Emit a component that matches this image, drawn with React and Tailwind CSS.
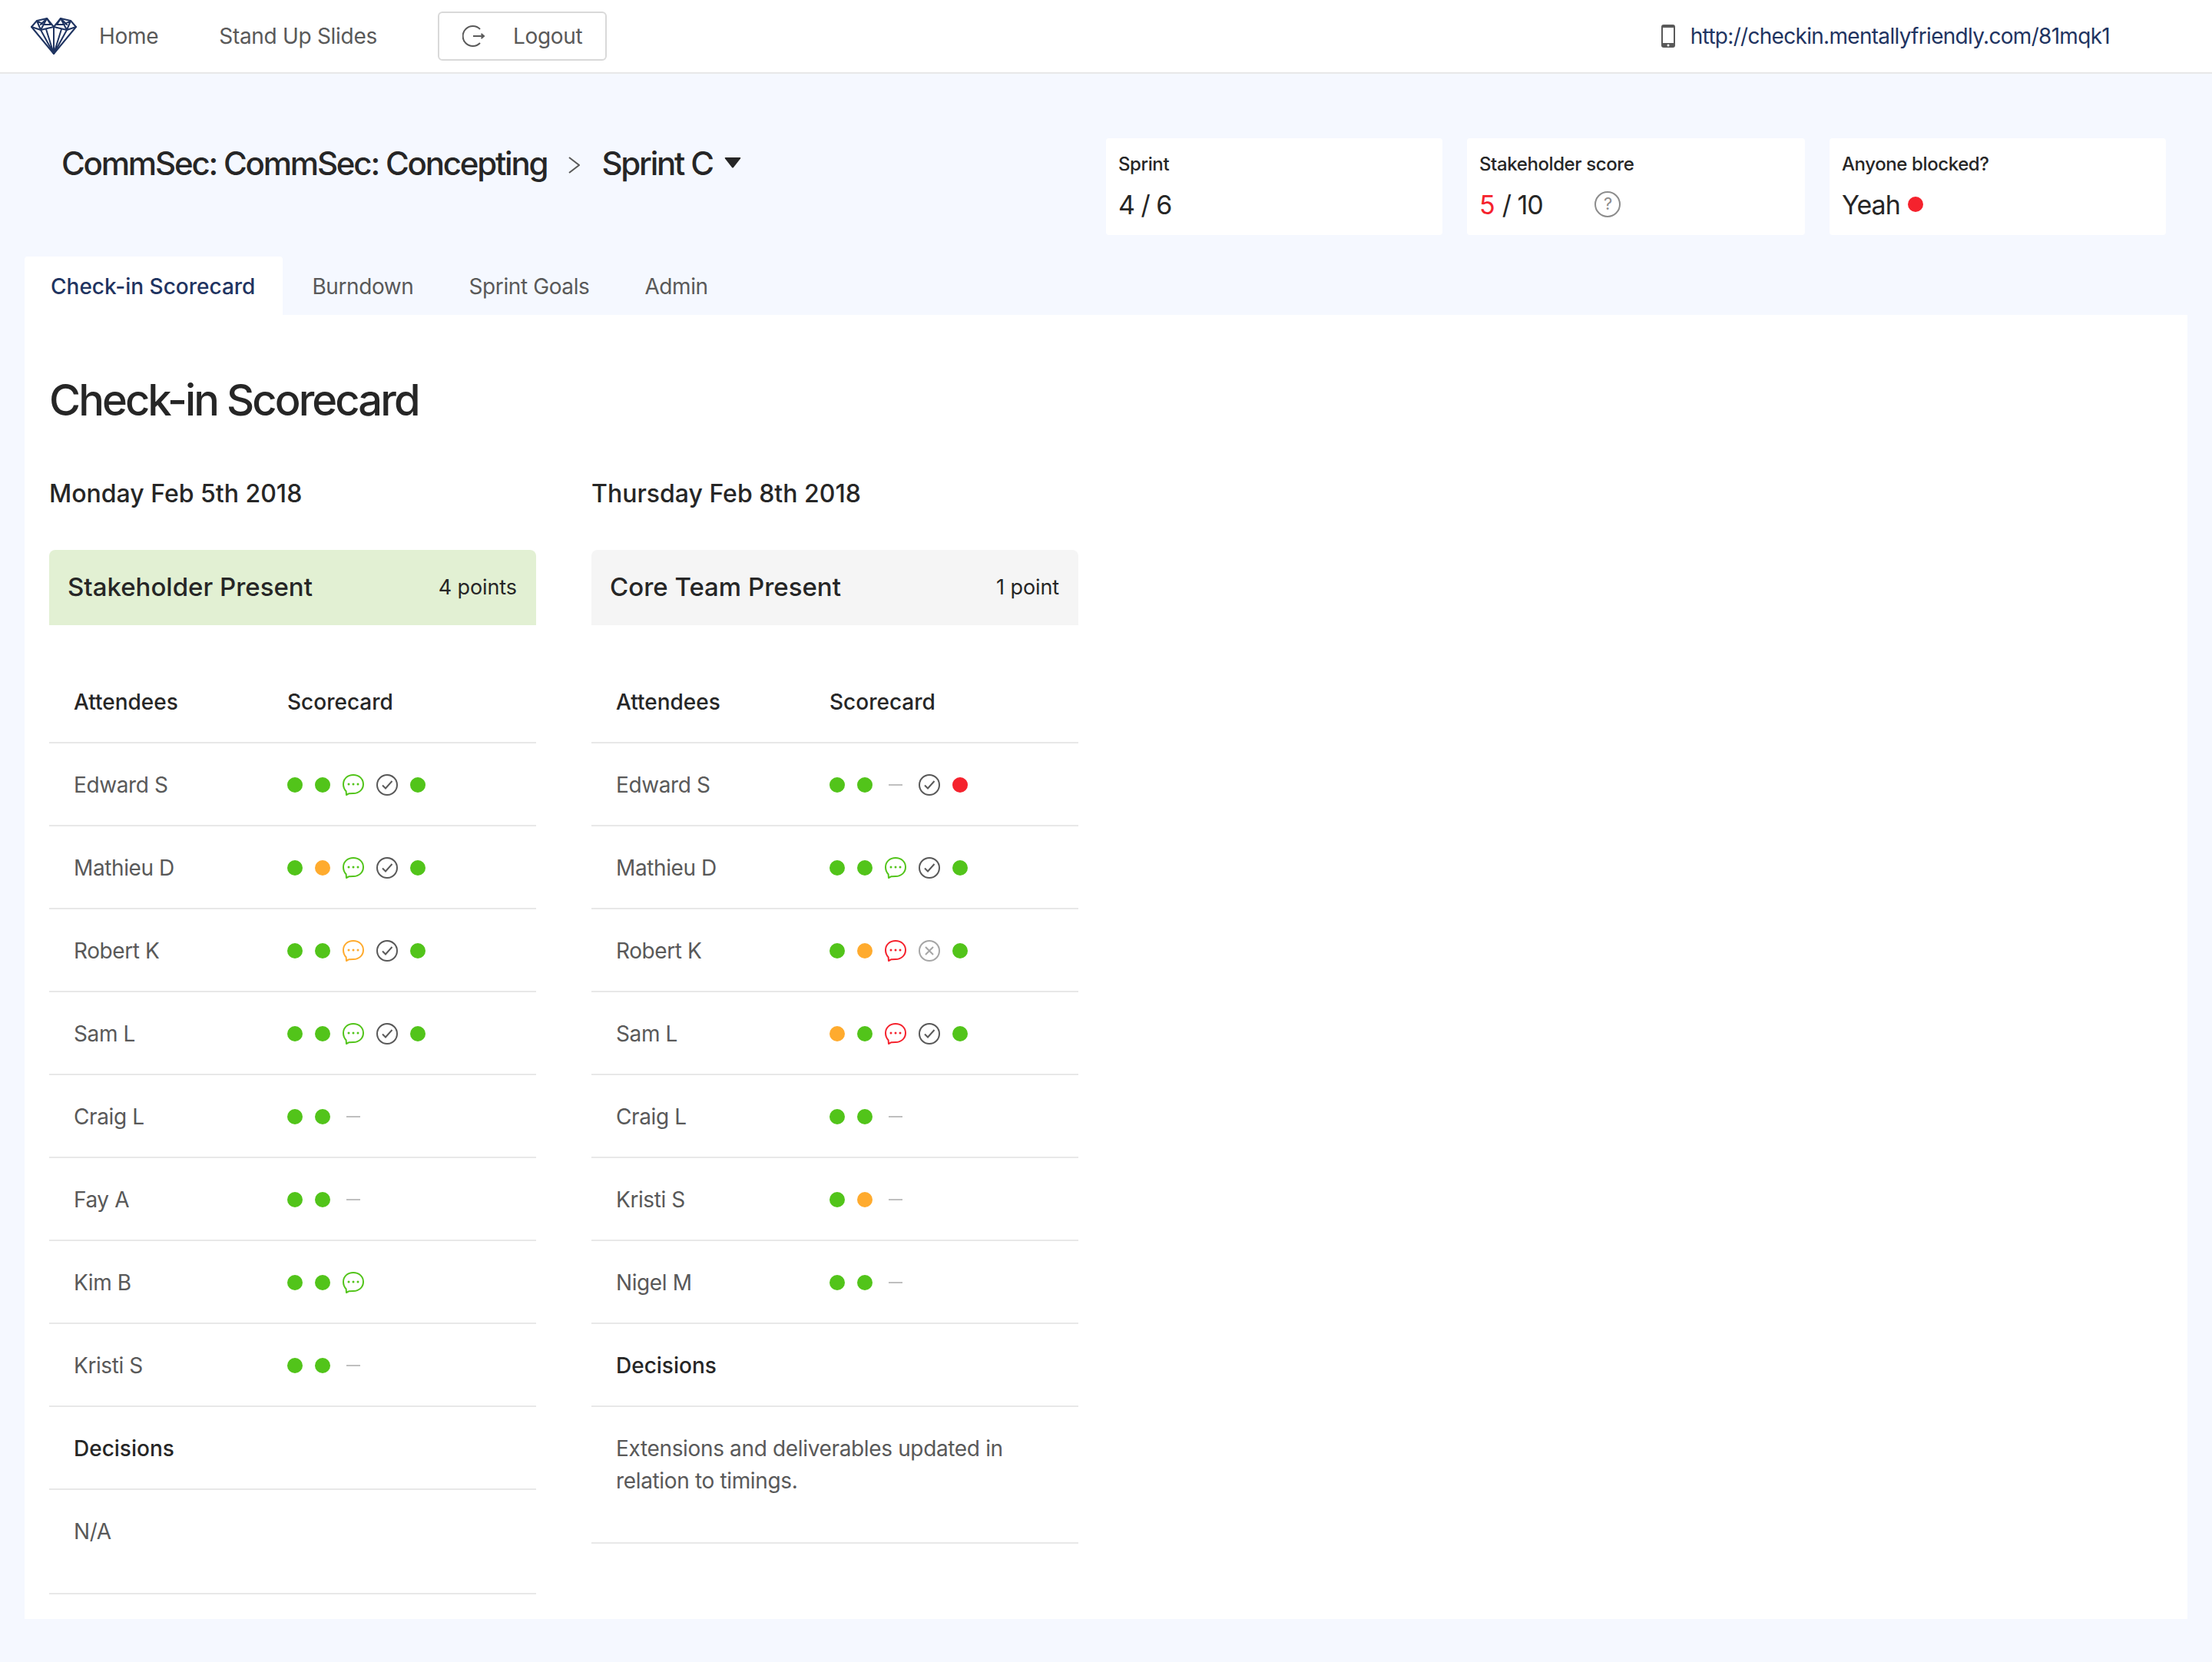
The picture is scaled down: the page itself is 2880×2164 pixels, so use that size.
import React from 'react';

const dot = (color) => ({ type: 'dot', color });
const G = dot('bg-[#52c41a]');
const O = dot('bg-[#ffab2e]');
const R = dot('bg-[#f5222d]');
const CHAT_G = { type: 'chat', color: '#52c41a' };
const CHAT_O = { type: 'chat', color: '#ffab2e' };
const CHAT_R = { type: 'chat', color: '#f5222d' };
const OK = { type: 'check' };
const NO = { type: 'cross' };
const DASH = { type: 'dash' };

const monday = [
  ['Edward S', [G, G, CHAT_G, OK, G]],
  ['Mathieu D', [G, O, CHAT_G, OK, G]],
  ['Robert K', [G, G, CHAT_O, OK, G]],
  ['Sam L', [G, G, CHAT_G, OK, G]],
  ['Craig L', [G, G, DASH]],
  ['Fay A', [G, G, DASH]],
  ['Kim B', [G, G, CHAT_G]],
  ['Kristi S', [G, G, DASH]],
];

const thursday = [
  ['Edward S', [G, G, DASH, OK, R]],
  ['Mathieu D', [G, G, CHAT_G, OK, G]],
  ['Robert K', [G, O, CHAT_R, NO, G]],
  ['Sam L', [O, G, CHAT_R, OK, G]],
  ['Craig L', [G, G, DASH]],
  ['Kristi S', [G, O, DASH]],
  ['Nigel M', [G, G, DASH]],
];

const DiamondLogo = () => (
  <svg width="60" height="48" viewBox="0 0 60 48" fill="none" stroke="#1f3461" strokeWidth="2" strokeLinejoin="round" strokeLinecap="round">
    <path d="M30 47 L1 12 L8 4 L21 1 L30 12 L39 1 L52 4 L59 12 Z" />
    <path d="M1 12 L13 16 L30 12 L47 16 L59 12" />
    <path d="M8 4 L13 16 L21 1 M13 9 L21 1 L26 9 M8 4 L17 9 L26 9" />
    <path d="M52 4 L47 16 L39 1 M47 9 L39 1 L34 9 M52 4 L43 9 L34 9" />
    <path d="M30 12 V47 M13 16 L30 47 L47 16 M20 15 L30 47 L40 15" />
  </svg>
);

const LogoutIcon = () => (
  <svg width="30" height="30" viewBox="0 0 30 30" fill="none" stroke="#595959" strokeWidth="2">
    <path d="M23 6 A13 13 0 1 0 23 24" />
    <path d="M14 15 H28 M24.5 12 L28 15 L24.5 18" />
  </svg>
);

const PhoneIcon = () => (
  <svg width="18" height="30" viewBox="0 0 18 30">
    <rect x="0" y="0" width="18" height="30" rx="3" fill="#595959" />
    <rect x="2" y="4" width="14" height="20" fill="#fff" />
    <circle cx="9" cy="27" r="1.5" fill="#fff" />
  </svg>
);

const Chat = ({ color }) => (
  <svg width="28" height="28" viewBox="0 0 28 28" fill="none">
    <path d="M14 1 C21.5 1 27 6 27 13 C27 20 21.5 25 14 25 C12.5 25 9 25 8.5 25.2 L5 27 L4.6 22.2 C2.4 20 1 17 1 13 C1 6 6.5 1 14 1 Z" stroke={color} strokeWidth="2" strokeLinejoin="round" />
    <circle cx="8" cy="13" r="1.5" fill={color} />
    <circle cx="14" cy="13" r="1.5" fill={color} />
    <circle cx="20" cy="13" r="1.5" fill={color} />
  </svg>
);

const CheckIcon = () => (
  <svg width="28" height="28" viewBox="0 0 28 28" fill="none" stroke="#595959" strokeWidth="2">
    <circle cx="14" cy="14" r="13" />
    <path d="M8 14.5 L12 18.5 L20.5 9" />
  </svg>
);

const CrossIcon = () => (
  <svg width="28" height="28" viewBox="0 0 28 28" fill="none" stroke="#a6a6a6" strokeWidth="2">
    <circle cx="14" cy="14" r="13" />
    <path d="M9 9 L19 19 M19 9 L9 19" />
  </svg>
);

const ScoreItem = ({ item }) => {
  if (item.type === 'dot') return <span className={`w-5 h-5 rounded-full ${item.color}`} />;
  if (item.type === 'chat') return <Chat color={item.color} />;
  if (item.type === 'check') return <CheckIcon />;
  if (item.type === 'cross') return <CrossIcon />;
  return (
    <span className="flex justify-center w-7">
      <span className="w-[18px] h-[2px] bg-[#bfbfbf]" />
    </span>
  );
};

const Row = ({ children }) => (
  <div className="flex items-center h-[108px] px-8 pt-[2px] border-b-2 border-[#e8e8e8]">{children}</div>
);

const DayColumn = ({ date, title, points, bannerClass, rows, decision }) => (
  <div className="w-[634px]">
    <h3 className="text-[32px] leading-[40px] font-medium text-[#262626]">{date}</h3>
    <div className={`flex justify-between items-center h-[98px] mt-[53px] pl-6 pr-[25px] rounded-t-lg ${bannerClass}`}>
      <span className="text-[33px] font-medium text-[#262626]">{title}</span>
      <span className="text-[27px] tracking-[-0.1px] text-[#262626]">{points}</span>
    </div>
    <div className="mt-[46px]">
      <Row>
        <span className="w-[278px] text-[28px] font-medium text-[#262626]">Attendees</span>
        <span className="text-[28px] font-medium text-[#262626]">Scorecard</span>
      </Row>
      {rows.map(([name, scores]) => (
        <Row key={name}>
          <span className="w-[278px] text-[28px] tracking-[-0.4px] text-[#595959]">{name}</span>
          <div className="flex items-center gap-4">
            {scores.map((s, i) => <ScoreItem key={i} item={s} />)}
          </div>
        </Row>
      ))}
      <Row>
        <span className="text-[28px] font-medium text-[#262626]">Decisions</span>
      </Row>
      <div className="px-8 pt-[33px] pb-[59px] border-b-2 border-[#e8e8e8] text-[28px] leading-[42px] tracking-[-0.35px] text-[#595959]">
        {decision}
      </div>
    </div>
  </div>
);

const StatCard = ({ label, width, children }) => (
  <div className={`${width} h-[126px] px-4 pt-[18px] bg-white rounded`}>
    <div className="text-[24px] leading-[32px] font-medium tracking-[-0.4px] text-[#262626]">{label}</div>
    <div className="flex items-center mt-[14px] h-[44px] text-[34px] tracking-[-1px] text-[#262626]">{children}</div>
  </div>
);

const tabs = ['Burndown', 'Sprint Goals', 'Admin'];

export default function App() {
  return (
    <div className="min-h-screen bg-[#f5f8ff] font-['Inter',sans-serif] pb-[56px]">
      <nav className="flex items-center h-[96px] pl-10 bg-white border-b-2 border-[#e8e8e8] text-[28px] tracking-[-0.3px] text-[#595959]">
        <DiamondLogo />
        <a className="ml-[29px]">Home</a>
        <a className="ml-[79px]">Stand Up Slides</a>
        <button className="flex items-center w-[220px] h-[64px] ml-[79px] pl-[30px] rounded-md border-2 border-[#d9d9d9]">
          <LogoutIcon />
          <span className="ml-[36px]">Logout</span>
        </button>
        <div className="flex items-center ml-auto mr-[133px]">
          <PhoneIcon />
          <span className="ml-[20px] tracking-[-0.7px] text-[#1f3461]">http://checkin.mentallyfriendly.com/81mqk1</span>
        </div>
      </nav>

      <header className="flex justify-between pt-[84px] pl-[80px] pr-[60px]">
        <div className="flex items-center h-[64px] text-[#262626]">
          <span className="text-[42px] font-medium tracking-[-2.2px]">CommSec: CommSec: Concepting</span>
          <svg width="15" height="22" viewBox="0 0 15 22" fill="none" stroke="#595959" strokeWidth="2" className="ml-[28px] mt-[6px]">
            <path d="M1 1 L14 11 L1 21" />
          </svg>
          <span className="ml-[28px] text-[42px] font-medium tracking-[-2.2px]">Sprint C</span>
          <svg width="22" height="14" viewBox="0 0 22 14" className="ml-[15px]">
            <path d="M1.5 0 H20.5 Q22 0 21 1.5 L12 13 Q11 14 10 13 L1 1.5 Q0 0 1.5 0 Z" fill="#262626" />
          </svg>
        </div>
        <div className="flex gap-8">
          <StatCard label="Sprint" width="w-[438px]">4 / 6</StatCard>
          <StatCard label="Stakeholder score" width="w-[440px]">
            <span className="text-[#f5222d]">5</span>
            <span className="ml-[10px]">/ 10</span>
            <svg width="34" height="34" viewBox="0 0 34 34" fill="none" className="ml-[67px]">
              <circle cx="17" cy="17" r="16" stroke="#8c8c8c" strokeWidth="2" />
              <text x="17" y="24" textAnchor="middle" fontSize="22" fill="#8c8c8c" fontFamily="Inter, sans-serif">?</text>
            </svg>
          </StatCard>
          <StatCard label="Anyone blocked?" width="w-[438px]">
            <span>Yeah</span>
            <span className="w-5 h-5 ml-[10px] rounded-full bg-[#f5222d]" />
          </StatCard>
        </div>
      </header>

      <div className="flex mt-[28px] ml-8 h-[76px] text-[28px] tracking-[-0.4px] text-[#595959]">
        <div className="flex items-center pl-[34px] pr-[36px] pt-[2px] rounded-t bg-white font-medium tracking-normal text-[#1f3461]">Check-in Scorecard</div>
        <div className="flex ml-[2px]">
          {tabs.map(t => (
            <div key={t} className="flex items-center px-[36px] pt-[2px]">{t}</div>
          ))}
        </div>
      </div>

      <main className="mx-8 px-8 pt-[75px] pb-[32px] bg-white">
        <h1 className="text-[56px] leading-[72px] font-medium tracking-[-2.9px] text-[#262626]">Check-in Scorecard</h1>
        <div className="flex items-start gap-[72px] mt-[66px]">
          <DayColumn
            date="Monday Feb 5th 2018"
            title="Stakeholder Present"
            points="4 points"
            bannerClass="bg-[#e2f0d3]"
            rows={monday}
            decision="N/A"
          />
          <DayColumn
            date="Thursday Feb 8th 2018"
            title="Core Team Present"
            points="1 point"
            bannerClass="bg-[#f5f5f5]"
            rows={thursday}
            decision="Extensions and deliverables updated in relation to timings."
          />
        </div>
      </main>
    </div>
  );
}
